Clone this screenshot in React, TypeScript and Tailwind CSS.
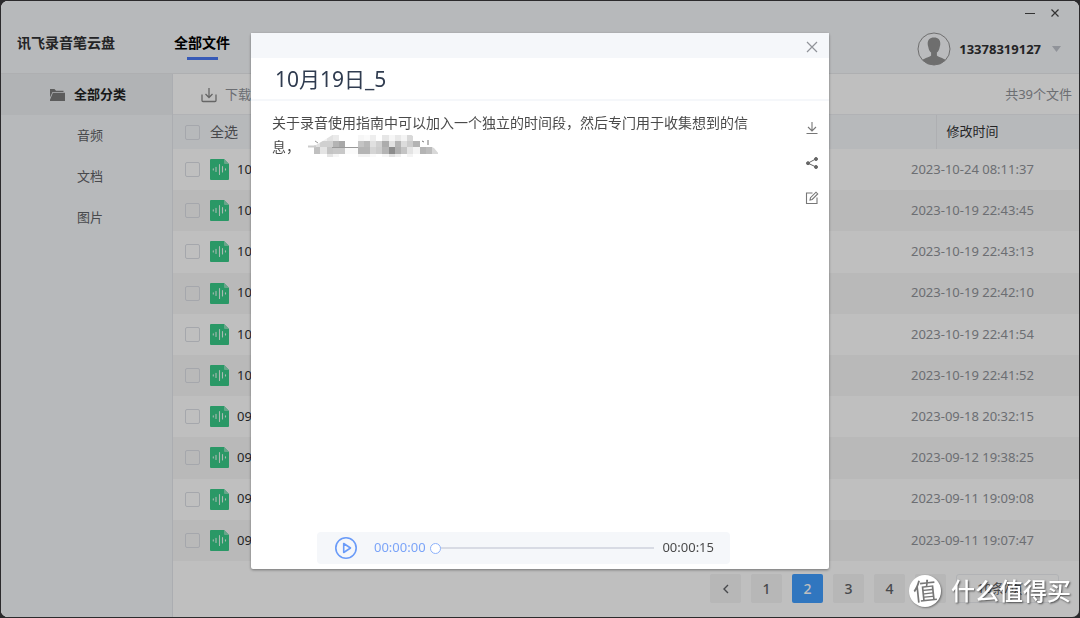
import React from "react";

const times = [
  "2023-10-24 08:11:37",
  "2023-10-19 22:43:45",
  "2023-10-19 22:43:13",
  "2023-10-19 22:42:10",
  "2023-10-19 22:41:54",
  "2023-10-19 22:41:52",
  "2023-09-18 20:32:15",
  "2023-09-12 19:38:25",
  "2023-09-11 19:09:08",
  "2023-09-11 19:07:47",
];

const fileName = (time: string) => `${time.slice(5, 7)}月${time.slice(8, 10)}日`;

const checkboxClass =
  "block size-[15px] shrink-0 appearance-none rounded-[2px] border border-[#dcdfe6] bg-transparent checked:bg-[#409eff]";

function FolderIcon() {
  return (
    <svg className="h-[14px] w-4" viewBox="0 0 16 14" fill="#7b7b7b" aria-hidden="true">
      <path d="M1 1h4.500l1.500 1.800h7.500v1.200H3.500L1 9.500z" />
      <path d="M3.900 4.800H16v7.700a.6.6 0 0 1-.6.6H1.600a.6.6 0 0 1-.6-.6v-.8z" />
    </svg>
  );
}

function AudioFileIcon() {
  return (
    <svg className="h-[21px] w-[19px] shrink-0" viewBox="0 0 19 21" aria-hidden="true">
      <path d="M1 0h13l5 5v15a1 1 0 0 1-1 1H1a1 1 0 0 1-1-1V1a1 1 0 0 1 1-1z" fill="#38cb89" />
      <path d="M14 0l5 5h-4a1 1 0 0 1-1-1z" fill="#8bdcb8" />
      <path d="M3.300 9.800v1.200M6 8.300v4.200M9.500 5.500v10M12.500 7.500v5.500M15.500 9.800v1.200" stroke="#e4f8ee" strokeWidth="1.100" strokeLinecap="round" />
    </svg>
  );
}

function Avatar() {
  return (
    <svg className="size-[34px]" viewBox="0 0 34 34" aria-hidden="true">
      <circle cx="17" cy="17" r="16" fill="#f8fafc" stroke="#939393" />
      <path
        d="M17 5.500c-4.300 0-6.600 2.700-6.300 6.700.1 1 .2 1.700.6 2.700.5 3 1.500 4.600 2.800 5.700v3c-.8 1.600-6.500 2.400-8.700 4.500A16 16 0 0 0 17 33a16 16 0 0 0 11.600-4.900c-2.200-2.100-7.900-2.900-8.700-4.500v-3c1.300-1.100 2.300-2.700 2.800-5.700.4-1 .5-1.700.6-2.700.3-4-2-6.700-6.300-6.700z"
        fill="#939393"
      />
    </svg>
  );
}

function Header() {
  return (
    <header className="flex h-[73px] shrink-0 items-start border-b border-[#e8eaed] bg-[#f5f7fa] pl-4">
      <h1 className="mt-[31px] w-[157px] text-sm leading-[22px] font-bold text-[#303133]">讯飞录音笔云盘</h1>
      <a href="#files" className="mt-[31px] flex flex-col items-center gap-[3px] text-sm leading-[22px] font-bold text-black">
        全部文件
        <span className="h-[3px] w-[31px] bg-[#4a78f5]" />
      </a>
      <div className="ml-auto flex flex-col items-end">
        <div className="flex h-[23px] items-center gap-[11px] pr-[17px] text-[#444]">
          <button aria-label="最小化" className="grid size-[14px] place-items-center">
            <svg className="size-[14px]" viewBox="0 0 14 14" stroke="currentColor" strokeWidth="1.200"><path d="M2 7.500h10" /></svg>
          </button>
          <button aria-label="关闭窗口" className="grid size-[14px] place-items-center">
            <svg className="size-[14px]" viewBox="0 0 14 14" stroke="currentColor" strokeWidth="1.200"><path d="M3.500 3.500l7 7M10.500 3.500l-7 7" /></svg>
          </button>
        </div>
        <button className="mt-[8px] flex items-center gap-2 pr-[18px] text-[13px] leading-5 font-bold text-[#303133]">
          <Avatar />
          <span>13378319127</span>
          <svg className="ml-[3px] h-[6px] w-[9px]" viewBox="0 0 9 6" fill="#c0c4cc" aria-hidden="true"><path d="M0 0h9L4.500 6z" /></svg>
        </button>
      </div>
    </header>
  );
}

function Sidebar() {
  return (
    <nav className="w-[172px] shrink-0 border-r border-[#e4e7ec] bg-[#f5f7fa] text-[13px] text-[#606266]">
      <a href="#all" className="flex h-[41px] items-center gap-[9px] bg-[#edeff2] pl-12 font-bold text-[#222]">
        <FolderIcon />
        全部分类
      </a>
      {["音频", "文档", "图片"].map((label) => (
        <a key={label} href={`#${label}`} className="flex h-[41px] items-center pl-[76px]">
          {label}
        </a>
      ))}
    </nav>
  );
}

function FileTable() {
  return (
    <table className="h-[446px] w-full table-fixed border-collapse text-[13px]">
      <colgroup>
        <col />
        <col className="w-[25px]" />
        <col className="w-[143px]" />
      </colgroup>
      <thead>
        <tr className="h-[34px] bg-[#f5f7fa]">
          <th colSpan={2} className="p-0 pl-3 text-left font-normal">
            <label className="flex items-center gap-[10px] text-sm text-[#606266]">
              <input type="checkbox" className={checkboxClass} />
              全选
            </label>
          </th>
          <th className="border-l border-[#e8eaee] p-0 pl-[10px] text-left font-normal text-[#303133]">修改时间</th>
        </tr>
      </thead>
      <tbody>
        {times.map((time) => (
          <tr key={time} className="bg-white even:bg-[#f7f7f7]">
            <td className="p-0 pl-3">
              <label className="flex items-center gap-[10px] text-[#303133]">
                <input type="checkbox" className={checkboxClass} />
                <AudioFileIcon />
                <span className="-ml-[2px]">{fileName(time)}</span>
              </label>
            </td>
            <td colSpan={2} className="p-0 whitespace-nowrap text-[#909399]">{time}</td>
          </tr>
        ))}
      </tbody>
    </table>
  );
}

const pageClass = "grid h-[29px] w-[31px] place-items-center rounded-[2px] bg-[#f4f4f5] text-[#606266]";

function Pagination() {
  return (
    <div className="mt-[13px] flex justify-end gap-[10px] pr-5 text-sm font-medium">
      <button aria-label="上一页" className={pageClass}>
        <svg className="h-[10px] w-[6px]" viewBox="0 0 6 10" fill="none" stroke="currentColor" strokeWidth="1.400" aria-hidden="true"><path d="M5 1L1 5l4 4" /></svg>
      </button>
      {[1, 2, 3, 4].map((page) => (
        <button key={page} className={page === 2 ? "grid h-[29px] w-[31px] place-items-center rounded-[2px] bg-[#409eff] text-white" : pageClass}>
          {page}
        </button>
      ))}
      <button aria-label="下一页" className={pageClass}>
        <svg className="h-[10px] w-[6px]" viewBox="0 0 6 10" fill="none" stroke="currentColor" strokeWidth="1.400" aria-hidden="true"><path d="M1 1l4 4-4 4" /></svg>
      </button>
      <select aria-label="每页条数" className="h-[29px] w-[103px] appearance-none rounded-[3px] border border-[#eceef2] bg-white pl-5 text-[13px] font-normal text-[#606266]">
        <option>10条/页</option>
      </select>
    </div>
  );
}

// Grey level of each mosaic tile, row by row; an empty string leaves the tile blank.
const mosaic = [
  ["", "", "f0", "e2", "ea", "", "", "", "f6", "fa", "ee", "", "e6", "f6", "e8", "f4", "d8", "", "", "", ""],
  ["", "e0", "d0", "d0", "b4", "a8", "", "", "c4", "b8", "e0", "d0", "ac", "e2", "b4", "dc", "cc", "b4", "", "", ""],
  ["", "c0", "e4", "c4", "c8", "c8", "fa", "fa", "b4", "b4", "d4", "cc", "b4", "8c", "b0", "c4", "e4", "f4", "b4", "bc", "d8"],
  ["", "", "", "e4", "f6", "", "", "", "f2", "f2", "fa", "", "f6", "e2", "f0", "", "f4", "", "", "", ""],
];

function BlurredWords() {
  return (
    <svg className="ml-2 inline-block h-6 w-[130px] align-top" viewBox="0 0 130 24" role="img" aria-label="已打码">
      <clipPath id="smudge">
        <path d="M0 11l8-1 10-6 8-5h76l10 7 14 7 5 6-4 2h-20v4H0z" />
      </clipPath>
      <g clipPath="url(#smudge)" shapeRendering="crispEdges">
        {mosaic.flatMap((row, r) =>
          row.map((level, c) =>
            level ? (
              <rect key={`${r}-${c}`} x={c * 6.2} y={r * 6.2} width={6.2} height={r === 3 ? 3 : 6.2} fill={`#${level}${level}${level}`} />
            ) : null,
          ),
        )}
      </g>
      <path d="M0 11.500h8" stroke="#ccc" strokeWidth="2" />
      <path d="M7 6l3 2M24 12.500h26" stroke="#999" fill="none" />
      <path d="M114 6l2 1M120 5v5" stroke="#777" fill="none" />
    </svg>
  );
}

function Player() {
  return (
    <div className="mb-[5px] ml-[66px] flex h-8 w-[413px] max-w-full items-center rounded-[4px] bg-[#f5f7fa] pr-4 pl-[17px] text-[13px]">
      <button aria-label="播放">
        <svg className="size-6" viewBox="0 0 24 24" fill="none" stroke="#6a9bf8" strokeWidth="1.600" strokeLinejoin="round" aria-hidden="true">
          <circle cx="12" cy="12" r="10.200" />
          <path d="M9.700 7.500v9l6.800-4.500z" />
        </svg>
      </button>
      <span className="ml-4 text-[#7ba4f8]">00:00:00</span>
      <input
        type="range"
        aria-label="播放进度"
        min={0}
        max={15}
        defaultValue={0}
        className="mr-2 ml-1 h-3 min-w-0 flex-1 appearance-none bg-[linear-gradient(#d8dbe4,#d8dbe4)] bg-[length:100%_2px] bg-center bg-no-repeat [&::-webkit-slider-thumb]:size-[11px] [&::-webkit-slider-thumb]:appearance-none [&::-webkit-slider-thumb]:rounded-full [&::-webkit-slider-thumb]:border [&::-webkit-slider-thumb]:border-[#8db2fa] [&::-webkit-slider-thumb]:bg-white"
      />
      <span className="text-[#4a4a4a]">00:00:15</span>
    </div>
  );
}

function NoteDialog() {
  return (
    <div role="dialog" aria-labelledby="note-title" className="flex h-[536px] w-[578px] max-w-full flex-col rounded-[2px] bg-white shadow-[0_1px_3px_rgba(0,0,0,0.4)]">
      <div className="flex h-[25px] items-center justify-end bg-[#f5f7fa] pr-[11px]">
        <button aria-label="关闭" className="mt-[3px]">
          <svg className="size-3" viewBox="0 0 12 12" stroke="#909399" strokeWidth="1.200" aria-hidden="true"><path d="M1 1l10 10M11 1L1 11" /></svg>
        </button>
      </div>
      <h2 id="note-title" className="h-[43px] border-b-2 border-[#f5f7fa] pl-6 text-[21px] leading-[43px] text-[#303c50]">10月19日_5</h2>
      <div className="flex flex-1 justify-between pr-[10px] pl-[21px]">
        <p className="mt-[10px] max-w-[480px] text-sm leading-6 text-[#4a4a4a]">
          关于录音使用指南中可以加入一个独立的时间段，然后专门用于收集想到的信息，
          <BlurredWords />
        </p>
        <div className="mt-5 flex flex-col gap-[21px] text-[#777]">
          <button aria-label="下载" className="size-[14px]">
            <svg className="size-[14px]" viewBox="0 0 14 14" fill="none" stroke="currentColor" strokeWidth="1.100"><path d="M7 1v8.500M3 6l4 4 4-4M1.500 12.500h11" /></svg>
          </button>
          <button aria-label="分享" className="size-[14px]">
            <svg className="size-[14px]" viewBox="0 0 14 14" fill="#666" stroke="#666"><path d="M11 2.800L3 7.200l8 3.800" fill="none" /><circle cx="11" cy="3" r="1.500" /><circle cx="3" cy="7.200" r="1.500" /><circle cx="11" cy="11" r="1.500" /></svg>
          </button>
          <button aria-label="编辑" className="size-[14px]">
            <svg className="size-[14px]" viewBox="0 0 14 14" fill="none" stroke="currentColor" strokeWidth="1.100"><path d="M7.500 2H1.500v10.500H12V6.500M5 9l.5-2.300L11 1.200l1.700 1.700-5.500 5.600z" /></svg>
          </button>
        </div>
      </div>
      <Player />
    </div>
  );
}

function Watermark() {
  return (
    <div className="pointer-events-none fixed right-[9px] bottom-[11px] flex items-center gap-[10px] text-2xl font-medium text-white">
      <span className="grid size-8 place-items-center rounded-full bg-white leading-8 font-normal text-[#777] shadow-[1px_1px_2px_rgba(0,0,0,0.4)]">
        <span className="-rotate-6">值</span>
      </span>
      <span className="leading-8 [text-shadow:1px_1px_2px_rgba(0,0,0,0.6)]">什么值得买</span>
    </div>
  );
}

export default function App() {
  return (
    <div className="min-h-screen bg-[#2b2a2c] p-px font-['Noto_Sans','Noto_Sans_CJK_SC',sans-serif]">
      <div className="flex min-h-[616px] flex-col overflow-hidden rounded-[7px] bg-white">
        <Header />
        <div className="flex flex-1">
          <Sidebar />
          <main className="min-w-0 flex-1">
            <div className="flex h-[41px] items-center justify-between border-b border-[#eceef2] pt-[2px] pr-[7px] pl-7 text-[13px] text-[#909399]">
              <button className="flex items-center gap-2">
                <svg className="size-4" viewBox="0 0 16 16" fill="none" stroke="#888" strokeWidth="1.300" aria-hidden="true"><path d="M8 1v9.500M4.500 7L8 10.500 11.500 7M1 7.500v6a1 1 0 0 0 1 1h12a1 1 0 0 0 1-1v-6" /></svg>
                下载
              </button>
              <span>共39个文件</span>
            </div>
            <FileTable />
            <Pagination />
          </main>
        </div>
      </div>
      <div className="fixed inset-px flex items-start justify-center rounded-[7px] bg-black/25 pt-8">
        <NoteDialog />
      </div>
      <Watermark />
    </div>
  );
}
